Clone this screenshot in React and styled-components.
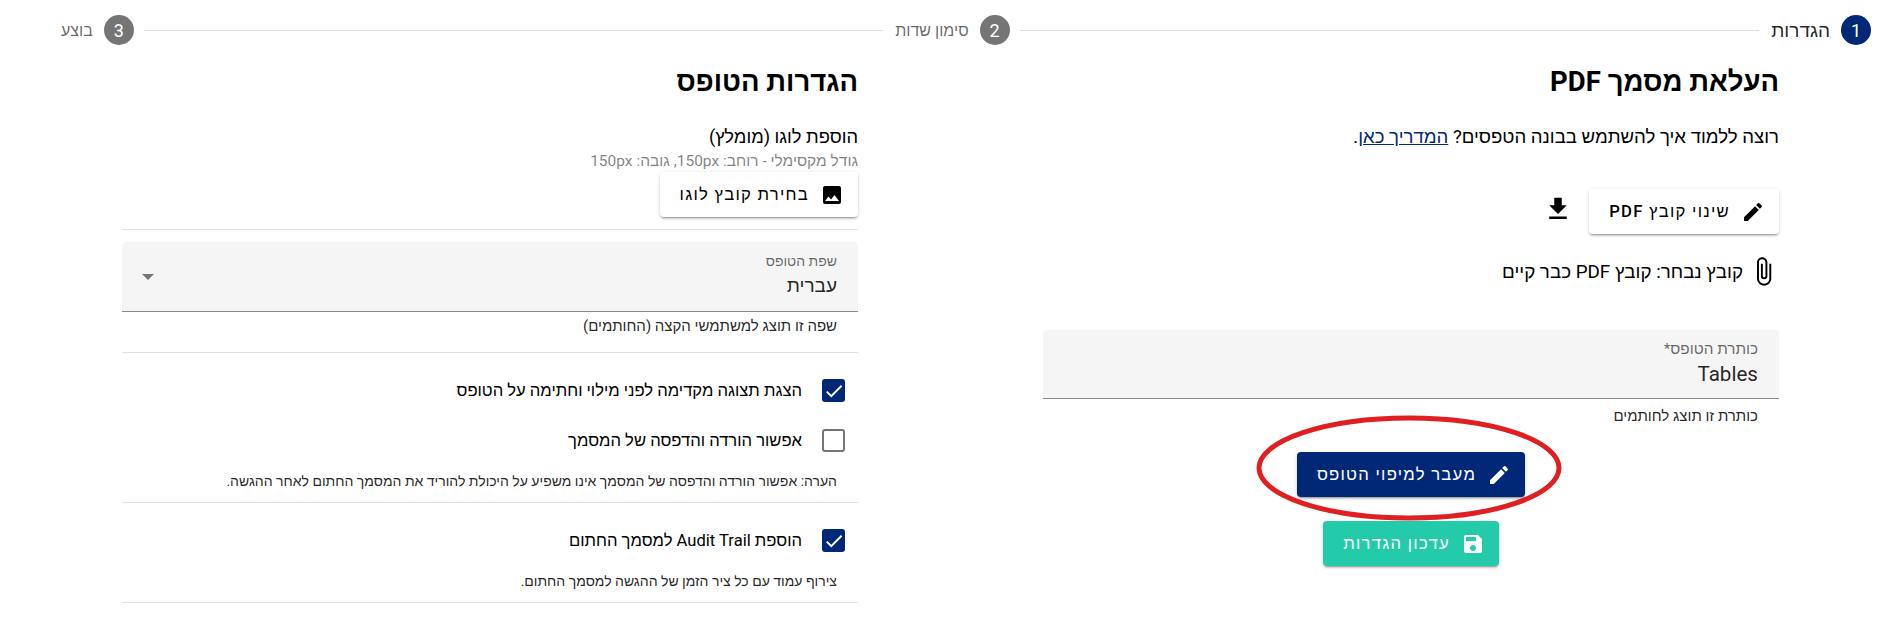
import React from 'react';
import styled, { createGlobalStyle } from 'styled-components';
import { MdEdit, MdFileDownload, MdAttachFile, MdImage, MdSave, MdCheck } from 'react-icons/md';

const GlobalStyle = createGlobalStyle`
	* { box-sizing: border-box; }
	html, body { margin: 0; background: #fff; }
	body {
		font-family: Roboto, "Liberation Sans", Arial, sans-serif;
		color: #000;
		overflow: hidden;
	}
`;

const Page = styled.div`
	direction: rtl;
	position: relative;
	width: 1900px;
	height: 623px;
	overflow: hidden;
`;

const Stepper = styled.div`
	display: flex;
	align-items: center;
	height: 30px;
	margin-top: 15px;
	padding: 0 29px 0 61px;
`;

const StepCircle = styled.span`
	flex: none;
	display: flex;
	align-items: center;
	justify-content: center;
	width: 30px;
	height: 30px;
	border-radius: 50%;
	background: ${p => (p.$active ? '#012876' : '#757575')};
	color: #fff;
	font-size: 18px;
`;

const StepLabel = styled.span`
	flex: none;
	margin-right: 11px;
	font-size: ${p => (p.$active ? 19 : 16)}px;
	color: ${p => (p.$active ? 'rgba(0,0,0,.87)' : 'rgba(0,0,0,.6)')};
`;

const StepLine = styled.span`
	flex: 1;
	height: 1px;
	margin: 0 12px 0 10px;
	background: #e0e0e0;
`;

const Columns = styled.div`
	display: flex;
	gap: 185px;
	padding-right: 121px;
`;

const Column = styled.section`
	flex: none;
	width: 736px;
`;

const Heading = styled.h2`
	margin: 19px 0 0;
	font-size: 27.5px;
	line-height: 36px;
	font-weight: 700;
`;

const Paragraph = styled.p`
	margin: 27px 0 0;
	font-size: 18.6px;
	line-height: 20px;
	a { color: #012876; }
`;

const Button = styled.button`
	display: inline-flex;
	align-items: center;
	gap: 11px;
	height: 45px;
	padding: 0 14px 0 20px;
	border: 0;
	border-radius: 4px;
	background: ${p => p.$bg || '#fff'};
	color: ${p => (p.$bg ? '#fff' : '#000')};
	font-family: inherit;
	font-size: 16.7px;
	font-weight: 500;
	letter-spacing: 1.25px;
	white-space: nowrap;
	box-shadow: 0 3px 1px -2px rgba(0,0,0,.2), 0 2px 2px rgba(0,0,0,.14), 0 1px 5px rgba(0,0,0,.12);
	svg { font-size: 24px; flex: none; }
`;

const FileRow = styled.div`
	display: flex;
	align-items: flex-start;
	gap: 16px;
	margin-top: 42px;
	> svg { font-size: 30px; margin-top: 5px; }
`;

const FileName = styled.div`
	display: flex;
	align-items: center;
	gap: 5px;
	margin-top: 22px;
	font-size: 18.8px;
	svg { font-size: 31px; }
`;

const Field = styled.div`
	height: ${p => p.$height || 70}px;
	margin-top: ${p => p.$top || 0}px;
	padding: 11px 21px 0;
	background: #f5f5f5;
	border-bottom: 1px solid #8a8a8a;
	border-radius: 4px 4px 0 0;
	position: relative;
`;

const FieldLabel = styled.div`
	font-size: ${p => p.$size || 14}px;
	line-height: 16px;
	color: rgba(0,0,0,.6);
`;

const FieldValue = styled.div`
	margin-top: 5px;
	font-size: ${p => p.$size || 19}px;
	line-height: 24px;
	color: rgba(0,0,0,.87);
`;

const Helper = styled.div`
	padding-right: 21px;
	margin-top: ${p => p.$top || 0}px;
	font-size: ${p => p.$size || 15}px;
	line-height: 16px;
	color: rgba(0,0,0,.87);
`;

const Actions = styled.div`
	display: flex;
	flex-direction: column;
	align-items: center;
	gap: 24px;
	margin-top: 28px;
`;

const Mark = styled.svg`
	position: absolute;
	left: 1256px;
	top: 415px;
	width: 306px;
	height: 106px;
	pointer-events: none;
`;

const SubTitle = styled.div`
	margin-top: 27px;
	font-size: 18.3px;
	line-height: 20px;
`;

const Muted = styled.div`
	font-size: 15.5px;
	line-height: 18px;
	margin: 5px 0 2px;
	color: rgba(0,0,0,.5);
`;

const Divider = styled.hr`
	margin: ${p => p.$top || 0}px 0 ${p => p.$bottom || 0}px;
	border: 0;
	border-top: 1px solid #e0e0e0;
`;

const Arrow = styled.span`
	position: absolute;
	left: 20px;
	top: 32px;
	border: 6px solid transparent;
	border-top-color: #757575;
	border-bottom: 0;
`;

const CheckRow = styled.label`
	display: flex;
	align-items: center;
	gap: 20px;
	height: 23px;
	margin-top: ${p => p.$top || 0}px;
	padding-right: 13px;
	font-size: 16.6px;
`;

const Box = styled.span`
	flex: none;
	display: flex;
	align-items: center;
	justify-content: center;
	width: 23px;
	height: 23px;
	border-radius: 3px;
	border: ${p => (p.$checked ? '0' : '2px solid #757575')};
	background: ${p => (p.$checked ? '#012876' : '#fff')};
	color: #fff;
	svg { font-size: 22px; }
`;

function Check({ checked, top, children }) {
	return (
		<CheckRow $top={top}>
			<Box $checked={checked}>{checked && <MdCheck />}</Box>
			{children}
		</CheckRow>
	);
}

export default function App() {
	return (
		<Page>
			<GlobalStyle />
			<Stepper>
				<StepCircle $active>1</StepCircle>
				<StepLabel $active>הגדרות</StepLabel>
				<StepLine />
				<StepCircle>2</StepCircle>
				<StepLabel>סימון שדות</StepLabel>
				<StepLine />
				<StepCircle>3</StepCircle>
				<StepLabel>בוצע</StepLabel>
			</Stepper>
			<Columns>
				<Column>
					<Heading>העלאת מסמך PDF</Heading>
					<Paragraph>רוצה ללמוד איך להשתמש בבונה הטפסים? <a href="#guide">המדריך כאן</a>.</Paragraph>
					<FileRow>
						<Button><MdEdit />שינוי קובץ PDF</Button>
						<MdFileDownload />
					</FileRow>
					<FileName><MdAttachFile />קובץ נבחר: קובץ PDF כבר קיים</FileName>
					<Field $top={43} $height={69}>
						<FieldLabel $size={15.3}>כותרת הטופס*</FieldLabel>
						<FieldValue $size={20.6}>Tables</FieldValue>
					</Field>
					<Helper $top={9}>כותרת זו תוצג לחותמים</Helper>
					<Actions>
						<Button $bg="#012876"><MdEdit />מעבר למיפוי הטופס</Button>
						<Button $bg="#24cbab"><MdSave />עדכון הגדרות</Button>
					</Actions>
				</Column>
				<Column>
					<Heading>הגדרות הטופס</Heading>
					<SubTitle>הוספת לוגו (מומלץ)</SubTitle>
					<Muted>גודל מקסימלי - רוחב: 150px, גובה: 150px</Muted>
					<Button><MdImage />בחירת קובץ לוגו</Button>
					<Divider $top={12} $bottom={12} />
					<Field>
						<FieldLabel>שפת הטופס</FieldLabel>
						<FieldValue>עברית</FieldValue>
						<Arrow />
					</Field>
					<Helper $top={6}>שפה זו תוצג למשתמשי הקצה (החותמים)</Helper>
					<Divider $top={18} />
					<Check checked top={26}>הצגת תצוגה מקדימה לפני מילוי וחתימה על הטופס</Check>
					<Check top={27}>אפשור הורדה והדפסה של המסמך</Check>
					<Helper $top={21} $size={14}>הערה: אפשור הורדה והדפסה של המסמך אינו משפיע על היכולת להוריד את המסמך החתום לאחר ההגשה.</Helper>
					<Divider $top={13} />
					<Check checked top={26}>הוספת Audit Trail למסמך החתום</Check>
					<Helper $top={21} $size={14}>צירוף עמוד עם כל ציר הזמן של ההגשה למסמך החתום.</Helper>
					<Divider $top={13} />
				</Column>
			</Columns>
			<Mark viewBox="0 0 306 106">
				<ellipse cx="153" cy="53" rx="150" ry="50" fill="none" stroke="#e02020" strokeWidth="5" />
			</Mark>
		</Page>
	);
}
